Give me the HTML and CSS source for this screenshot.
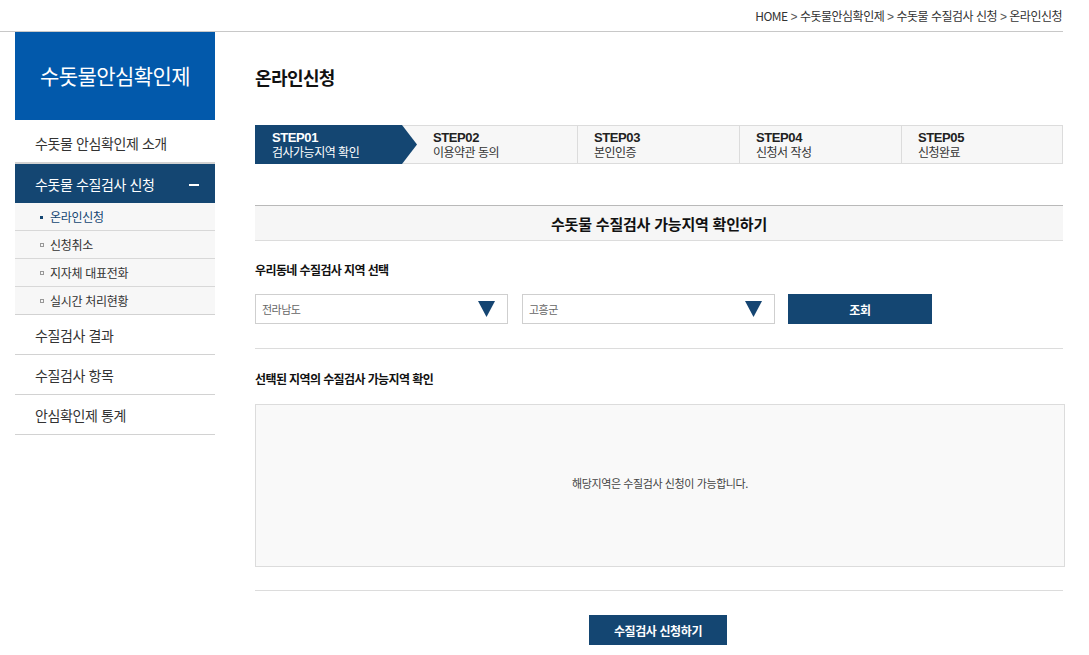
FILE: index.html
```html
<!DOCTYPE html>
<html lang="ko">
<head>
<meta charset="utf-8">
<title>온라인신청</title>
<link rel="stylesheet" href="styles.css">
</head>
<body>
<div class="topbar">
  <div class="crumb">HOME <span class="gt">&gt;</span> 수돗물안심확인제 <span class="gt">&gt;</span> 수돗물 수질검사 신청 <span class="gt">&gt;</span> 온라인신청</div>
</div>
<div class="layout">
  <aside class="side">
    <div class="side-head">수돗물안심확인제</div>
    <ul class="menu">
      <li class="menu-item">수돗물 안심확인제 소개</li>
      <li class="menu-item active"><span>수돗물 수질검사 신청</span><span class="minus"></span></li>
      <li class="sub">
        <ul>
          <li class="sub-item on"><span class="dot"></span>온라인신청</li>
          <li class="sub-item"><span class="dot"></span>신청취소</li>
          <li class="sub-item"><span class="dot"></span>지자체 대표전화</li>
          <li class="sub-item"><span class="dot"></span>실시간 처리현황</li>
        </ul>
      </li>
      <li class="menu-item">수질검사 결과</li>
      <li class="menu-item">수질검사 항목</li>
      <li class="menu-item">안심확인제 통계</li>
    </ul>
  </aside>
  <main class="main">
    <h1 class="page-title">온라인신청</h1>
    <ol class="steps">
      <li class="step cur"><b>STEP01</b><span>검사가능지역 확인</span></li>
      <li class="step"><b>STEP02</b><span>이용약관 동의</span></li>
      <li class="step div"><b>STEP03</b><span>본인인증</span></li>
      <li class="step div"><b>STEP04</b><span>신청서 작성</span></li>
      <li class="step div"><b>STEP05</b><span>신청완료</span></li>
    </ol>
    <h2 class="sec-title">수돗물 수질검사 가능지역 확인하기</h2>
    <h3 class="label">우리동네 수질검사 지역 선택</h3>
    <div class="search">
      <div class="select"><span>전라남도</span><svg class="tri" width="17" height="16" viewBox="0 0 17 16"><polygon points="0,0 17,0 8.5,16" fill="#154572"/></svg></div>
      <div class="select"><span>고흥군</span><svg class="tri" width="17" height="16" viewBox="0 0 17 16"><polygon points="0,0 17,0 8.5,16" fill="#154572"/></svg></div>
      <button class="btn btn-search">조회</button>
    </div>
    <hr class="rule">
    <h3 class="label label2">선택된 지역의 수질검사 가능지역 확인</h3>
    <div class="result">해당지역은 수질검사 신청이 가능합니다.</div>
    <hr class="rule rule2">
    <div class="submit-row"><button class="btn btn-submit">수질검사 신청하기</button></div>
  </main>
</div>
</body>
</html>
```
FILE: styles.css
```css
* { box-sizing: border-box; }
html, body { margin: 0; padding: 0; background: #fff; }
body {
  font-family: "Noto Sans CJK KR", "Noto Sans", sans-serif;
  color: #222;
  width: 1089px;
  height: 655px;
  overflow: hidden;
}
ul, ol { list-style: none; margin: 0; padding: 0; }
h1, h2, h3 { margin: 0; font-weight: normal; }

.topbar {
  width: 1063px;
  height: 32px;
  border-bottom: 1px solid #c8c8c8;
  display: flex;
  justify-content: flex-end;
  align-items: center;
}
.crumb {
  font-size: 12px;
  color: #333;
  letter-spacing: -0.5px;
  padding-right: 1px;
  line-height: 16px;
  margin-top: 2px;
}
.crumb .gt { font-family: "Liberation Sans", sans-serif; color: #555; }

.layout { display: flex; }
.side { width: 200px; margin-left: 15px; }
.side-head {
  height: 88px;
  background: #0259ab;
  color: #fff;
  font-size: 21px;
  letter-spacing: -0.6px;
  display: flex;
  align-items: center;
  justify-content: center;
  padding-bottom: 2px;
}
.menu-item {
  height: 40px;
  border-bottom: 1px solid #d2d2d2;
  display: flex;
  align-items: center;
  padding-left: 20px;
  font-size: 14px;
  letter-spacing: -0.4px;
  color: #333;
}
.menu-item:first-child { height: 44px; padding-top: 4px; border-bottom: 2px solid #d2d2d2; }
.menu-item.active {
  background: #144672;
  color: #fff;
  height: 39px;
  border-bottom: 0;
  justify-content: space-between;
  padding-right: 16px;
}
.minus { width: 10px; height: 2px; background: #fff; margin-top: 2px; }
.sub { background: #f7f7f7; border-bottom: 1px solid #d2d2d2; }
.sub-item {
  height: 28px;
  display: flex;
  align-items: center;
  padding-left: 25px;
  font-size: 12px;
  color: #333;
  letter-spacing: -0.3px;
  border-bottom: 1px solid #d8d8d8;
}
.sub-item:last-child { border-bottom: 0; height: 27px; }
.sub-item.on { color: #144672; }
.dot {
  width: 4px; height: 4px;
  border: 1px solid #999;
  margin-right: 6px;
  margin-top: 1px;
}
.sub-item.on .dot { background: #144672; border-color: #144672; width: 3px; height: 3px; margin-right: 7px; }

.main { width: 808px; margin-left: 40px; }
.page-title {
  font-size: 18px;
  font-weight: bold;
  letter-spacing: -0.6px;
  color: #111;
  margin-top: 32px;
  line-height: 26px;
}
.steps {
  margin-top: 35px;
  height: 39px;
  border: 1px solid #dcdcdc;
  background: #f7f7f7;
  display: grid;
  grid-template-columns: 161px 160px 162px 162px 1fr;
}
.step {
  display: flex;
  flex-direction: column;
  justify-content: center;
  padding-left: 16px;
  color: #333;
  line-height: 14px;
}
.step b { font-family: "Liberation Sans", Arial, sans-serif; font-size: 13px; letter-spacing: -0.4px; color: #222; }
.step span { font-size: 12px; letter-spacing: -0.5px; }
.step.div { border-left: 1px solid #dcdcdc; }
.step.cur {
  background: #144672;
  color: #fff;
  margin: -1px 0 -1px -1px;
  padding-left: 17px;
  clip-path: polygon(0 0, calc(100% - 15px) 0, 100% 50%, calc(100% - 15px) 100%, 0 100%);
}
.step.cur b { color: #fff; }

.sec-title {
  margin-top: 41px;
  height: 36px;
  background: #f6f6f6;
  border-top: 1px solid #b9b9b9;
  border-bottom: 1px solid #dcdcdc;
  display: flex;
  align-items: center;
  justify-content: center;
  font-size: 15px;
  font-weight: bold;
  letter-spacing: -0.2px;
  color: #111;
}
.label {
  font-size: 12px;
  font-weight: bold;
  letter-spacing: -0.6px;
  color: #111;
  margin-top: 20px;
  line-height: 18px;
}
.search { display: flex; margin-top: 15px; height: 30px; }
.select {
  width: 253px;
  height: 30px;
  border: 1px solid #cfcfcf;
  display: flex;
  align-items: center;
  justify-content: space-between;
  padding: 0 12px 0 6px;
  font-size: 11px;
  color: #666;
  letter-spacing: -0.5px;
  margin-right: 14px;
}
.select + .select { margin-right: 13px; }
.tri { display: block; }
.btn {
  background: #144672;
  color: #fff;
  border: 0;
  font-family: "Noto Sans CJK KR", sans-serif;
  font-weight: bold;
  font-size: 12px;
  letter-spacing: -0.4px;
  padding: 0;
}
.btn-search { width: 144px; height: 30px; }
.rule { border: 0; border-top: 1px solid #dcdcdc; margin: 24px 0 0; }
.label2 { margin-top: 21px; }
.result {
  margin-top: 16px;
  width: 810px;
  height: 163px;
  background: #f9f9f9;
  border: 1px solid #dcdcdc;
  display: flex;
  align-items: center;
  justify-content: center;
  font-size: 11px;
  color: #444;
  letter-spacing: -0.4px;
  padding-bottom: 5px;
}
.rule2 { margin-top: 23px; }
.submit-row { display: flex; justify-content: center; margin-top: 24px; padding-right: 2px; }
.btn-submit { width: 138px; height: 30px; }
```
